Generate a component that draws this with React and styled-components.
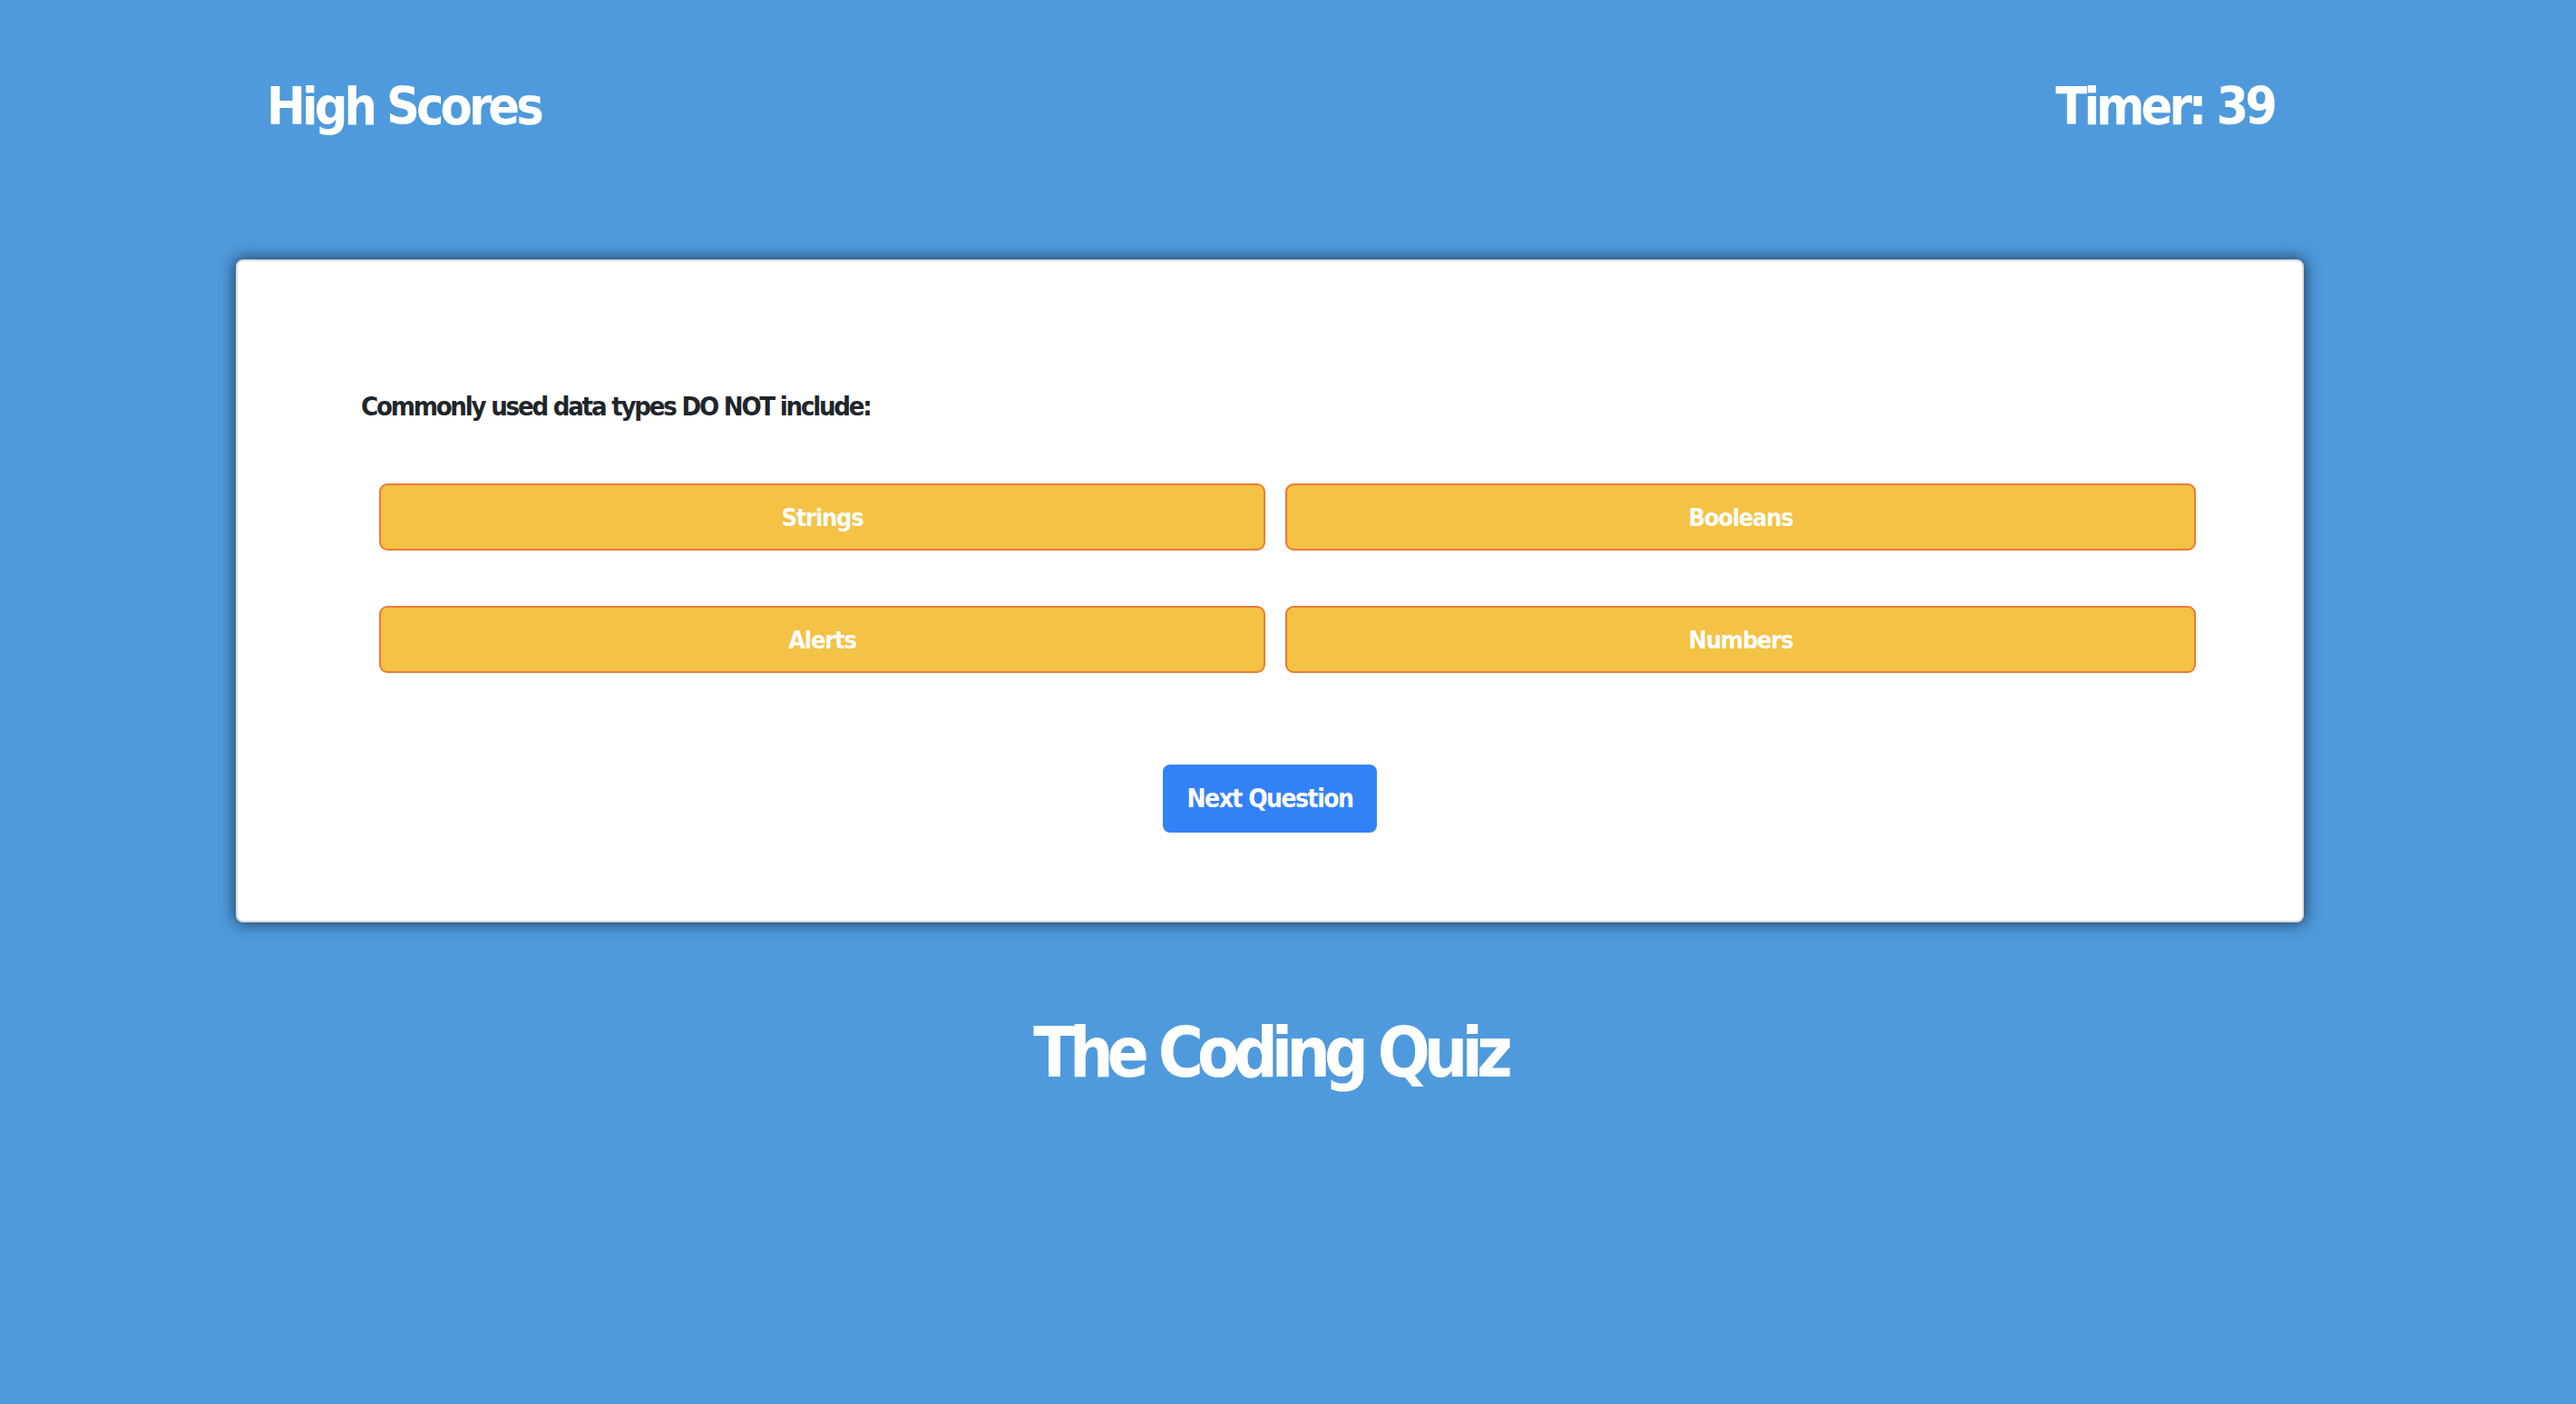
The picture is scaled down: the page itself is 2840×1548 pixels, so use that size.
import React from 'react';
import styled, { createGlobalStyle } from 'styled-components';

const GlobalStyle = createGlobalStyle`
    html, body {
        margin: 0;
        padding: 0;
        background-color: #4f9adc;
        min-height: 100%;
    }
    body {
        font-family: "DejaVu Sans Condensed", "Liberation Sans Narrow", "Liberation Sans", sans-serif;
    }
`

const choices = ['Strings', 'Booleans', 'Alerts', 'Numbers'];

export default function App() {
    return (
        <>
            <GlobalStyle />
            <Page>
                <Container>
                    <Header>
                        <HeaderLink>High Scores</HeaderLink>
                        <HeaderLink>Timer: 39</HeaderLink>
                    </Header>
                    <Card>
                        <Question>Commonly used data types DO NOT include:</Question>
                        <Choices>
                            {choices.map((c) => (
                                <Choice key={c}>{c}</Choice>
                            ))}
                        </Choices>
                        <NextRow>
                            <NextButton>Next Question</NextButton>
                        </NextRow>
                    </Card>
                    <Title>The Coding Quiz</Title>
                </Container>
            </Page>
        </>
    )
}

const Page = styled.div`
    min-height: 1548px;
    padding-right: 40px;
    background-color: #4f9adc;
`

const Container = styled.div`
    width: 2280px;
    margin: 0 auto;
    padding-top: 79px;
`

const Header = styled.div`
    display: flex;
    justify-content: space-between;
    padding: 0 33px 0 34px;
    margin-bottom: 130px;
`

const HeaderLink = styled.div`
    color: #ffffff;
    font-size: 57px;
    font-weight: 700;
    line-height: 77px;
    letter-spacing: -3.9px;
`

const Card = styled.div`
    background: #ffffff;
    border: 2px solid #dcdcdc;
    border-radius: 8px;
    box-shadow: 0 0 16px 2px rgba(20, 40, 60, 0.75);
    padding: 140px 117px 96px 136px;
    height: 731px;
    box-sizing: border-box;
`

const Question = styled.div`
    color: #212529;
    font-size: 29px;
    font-weight: 700;
    line-height: 40px;
    letter-spacing: -2.2px;
`

const Choices = styled.div`
    display: grid;
    grid-template-columns: 977fr 1004fr;
    column-gap: 22px;
    row-gap: 61px;
    margin: 65px 0 0 20px;
`

const Choice = styled.button`
    height: 74px;
    background-color: #f4c244;
    border: 2px solid #ee7a35;
    border-radius: 9px;
    color: #ffffff;
    font-family: inherit;
    font-size: 27px;
    font-weight: 700;
    letter-spacing: -1.2px;
    cursor: pointer;
`

const NextRow = styled.div`
    display: flex;
    justify-content: center;
    margin-top: 101px;
    margin-left: -136px;
    margin-right: -117px;
`

const NextButton = styled.button`
    width: 236px;
    height: 75px;
    padding: 0;
    background-color: #3381f6;
    border: none;
    border-radius: 8px;
    color: #ffffff;
    font-family: inherit;
    font-size: 28px;
    font-weight: 700;
    letter-spacing: -1.5px;
    white-space: nowrap;
    cursor: pointer;
`

const Title = styled.h1`
    margin: 86px 0 0;
    text-align: center;
    color: #ffffff;
    font-size: 76px;
    font-weight: 700;
    line-height: 115px;
    letter-spacing: -7px;
`
